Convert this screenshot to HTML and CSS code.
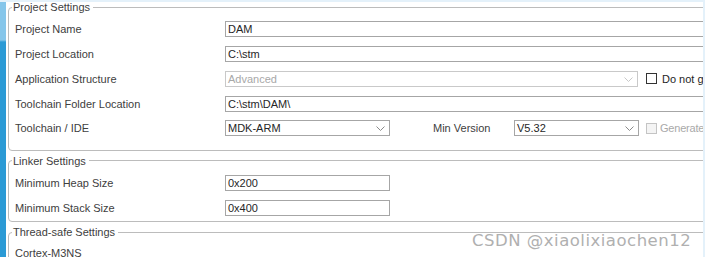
FILE: index.html
```html
<!DOCTYPE html>
<html lang="en">
<head>
    <meta charset="UTF-8">
    <title>Project Manager</title>
    <link rel="stylesheet" href="styles.css">
</head>
<body>
    <div class="window">
        <div class="sidebar"></div>

        <div class="content">
            <fieldset class="group group-project">
                <legend>Project Settings</legend>
                <div class="row">
                    <span class="label">Project Name</span>
                    <div class="field field-wide">DAM</div>
                </div>
                <div class="row">
                    <span class="label">Project Location</span>
                    <div class="field field-wide">C:\stm</div>
                </div>
                <div class="row">
                    <span class="label">Application Structure</span>
                    <div class="field select select-long disabled">
                        <span>Advanced</span>
                        <svg class="chevron" width="9" height="5" viewBox="0 0 9 5"><path d="M0.5 0.5 L4.5 4.5 L8.5 0.5" fill="none" stroke="#c8c8c8" stroke-width="1"/></svg>
                    </div>
                    <label class="check"><span class="box"></span>Do not generate the main()</label>
                </div>
                <div class="row">
                    <span class="label">Toolchain Folder Location</span>
                    <div class="field field-wide">C:\stm\DAM\</div>
                </div>
                <div class="row">
                    <span class="label">Toolchain / IDE</span>
                    <div class="field select select-short">
                        <span>MDK-ARM</span>
                        <svg class="chevron" width="9" height="5" viewBox="0 0 9 5"><path d="M0.5 0.5 L4.5 4.5 L8.5 0.5" fill="none" stroke="#8a8a8a" stroke-width="1"/></svg>
                    </div>
                    <span class="label label-min">Min Version</span>
                    <div class="field select select-version">
                        <span>V5.32</span>
                        <svg class="chevron" width="9" height="5" viewBox="0 0 9 5"><path d="M0.5 0.5 L4.5 4.5 L8.5 0.5" fill="none" stroke="#8a8a8a" stroke-width="1"/></svg>
                    </div>
                    <label class="check check-off"><span class="box"></span>Generate</label>
                </div>
            </fieldset>

            <fieldset class="group group-linker">
                <legend>Linker Settings</legend>
                <div class="row">
                    <span class="label">Minimum Heap Size</span>
                    <div class="field field-short">0x200</div>
                </div>
                <div class="row">
                    <span class="label">Minimum Stack Size</span>
                    <div class="field field-short">0x400</div>
                </div>
            </fieldset>

            <fieldset class="group group-thread">
                <legend>Thread-safe Settings</legend>
                <div class="row">
                    <span class="label">Cortex-M3NS</span>
                </div>
            </fieldset>
        </div>
    </div>

    <div class="watermark">CSDN @xiaolixiaochen12</div>
</body>
</html>
```

FILE: styles.css
```css
:root {
    --line: #bcbcbc;
    --field-line: #a6a6a6;
    --text: #404040;
    --blue-light: #86c6ea;
    --blue-dark: #2b9ad5;
}

body {
    margin: 0;
    width: 705px;
    height: 257px;
    overflow: hidden;
    background: #fff;
    border-top: 2px solid #e4f1fa;
    box-sizing: border-box;
    font-family: 'Liberation Sans', Arial, sans-serif;
    font-size: 11px;
    color: var(--text);
    position: relative;
}

body::after {
    content: '';
    position: absolute;
    top: 0;
    right: 0;
    width: 2px;
    height: 100%;
    background: #e4f1fa;
}

.window {
    display: flex;
    height: 100%;
}

.sidebar {
    flex: 0 0 6px;
    background: linear-gradient(to bottom, var(--blue-light) 0, var(--blue-light) 38px, var(--blue-dark) 40px);
}

.content {
    padding-left: 2px;
    flex: 0 0 760px;
}

.group {
    margin: 0;
    padding: 5px 0 0 6px;
    border: 1px solid var(--line);
    border-radius: 4px;
    min-width: 0;
}

.group legend {
    padding: 0 3px 0 1px;
    margin-left: -3px;
    line-height: 10px;
    height: 10px;
}

.group-project {
    padding-bottom: 9px;
}

.group-linker {
    margin-top: 5px;
    padding-bottom: 1px;
}

.group-thread {
    margin-top: 5px;
    padding-top: 3px;
    height: 40px;
}

.row {
    display: flex;
    align-items: center;
    height: 24.75px;
}

.label {
    flex: 0 0 210px;
    white-space: nowrap;
}

.label-min {
    flex: 0 0 81px;
    margin-left: 43px;
}

.field {
    box-sizing: border-box;
    height: 16px;
    border: 1px solid var(--field-line);
    padding: 0 2px;
    line-height: 14px;
    color: #262626;
    white-space: nowrap;
    flex: none;
}

.field-wide {
    width: 520px;
}

.field-short {
    width: 165px;
}

.select {
    display: flex;
    align-items: center;
    justify-content: space-between;
    padding-right: 4px;
}

.select-long {
    width: 413px;
}

.select-short {
    width: 165px;
}

.select-version {
    width: 125px;
}

.disabled {
    border-color: #c9c9c9;
    color: #a8a8a8;
}

.chevron {
    display: block;
    margin-top: 1px;
}

.check {
    display: flex;
    align-items: center;
    margin-left: 8px;
    white-space: nowrap;
    color: #1e1e1e;
}

.check .box {
    width: 9px;
    height: 9px;
    border: 1px solid #333;
    margin-right: 5px;
    background: #fff;
}

.check-off {
    margin-left: 7px;
    color: #a9a9a9;
    letter-spacing: -0.2px;
}

.check-off .box {
    border-color: #c4c4c4;
    background: #f4f4f4;
    margin-right: 3px;
}

.watermark {
    position: absolute;
    left: 472px;
    top: 229px;
    font-family: 'DejaVu Sans', sans-serif;
    font-size: 16.5px;
    color: #b0b0b0;
    letter-spacing: 0.5px;
    text-shadow: 0 0 1px #fff;
}
```
